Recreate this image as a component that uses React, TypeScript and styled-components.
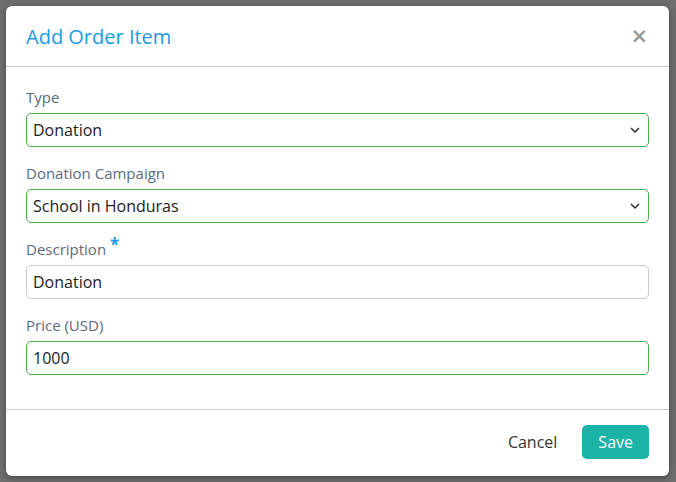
import React from 'react';
import styled, { createGlobalStyle } from 'styled-components';

const GlobalStyle = createGlobalStyle`
  html, body {
    margin: 0;
    padding: 0;
    background: #6e6e6e;
    font-family: "Open Sans", "Noto Sans", sans-serif;
  }
  * { box-sizing: border-box; }
`;

const Backdrop = styled.div`
  width: 676px;
  height: 482px;
  padding: 6px 7px 6px 6px;
  background: #6e6e6e;
`;

const Dialog = styled.div`
  background: #fff;
  border-radius: 6px;
  box-shadow: 0 2px 6px rgba(0, 0, 0, 0.35);
  width: 663px;
  height: 470px;
  display: flex;
  flex-direction: column;
`;

const Header = styled.div`
  height: 61px;
  padding: 0 20px;
  display: flex;
  align-items: center;
  justify-content: space-between;
  border-bottom: 1px solid #c8c8c8;
`;

const Title = styled.h4`
  margin: 0;
  font-size: 20px;
  font-weight: 400;
  color: #1a9be6;
`;

const Close = styled.button`
  border: 0;
  background: none;
  padding: 0;
  margin-right: 1px;
  color: #9a9a9a;
  font-family: "DejaVu Sans", sans-serif;
  font-size: 21px;
  font-weight: 700;
  line-height: 1;
  cursor: pointer;
`;

const Body = styled.div`
  flex: 1;
  padding: 20px 20px 4px;
`;

const Group = styled.div`
  margin-bottom: 16px;
`;

const Label = styled.label`
  display: block;
  font-size: 15px;
  line-height: 21px;
  color: #5a6b7b;
  margin-bottom: 5px;
`;

const Required = styled.span`
  color: #1a9be6;
  font-size: 17px;
  font-weight: 700;
  line-height: 0;
  margin-left: 4px;
  position: relative;
  top: -4px;
`;

const Field = styled.div<{ $valid?: boolean }>`
  height: 34px;
  border: 1px solid ${p => (p.$valid ? '#4caf50' : '#c9c9c9')};
  border-radius: 5px;
  padding: 0 6px;
  display: flex;
  align-items: center;
  font-size: 16px;
  color: #222;
`;

const Value = styled.span`
  flex: 1;
`;

const Chevron = styled.svg`
  width: 10px;
  height: 6px;
  margin-right: 2px;
`;

const Footer = styled.div`
  border-top: 1px solid #c8c8c8;
  padding: 15px 20px 17px;
  display: flex;
  justify-content: flex-end;
  align-items: center;
  gap: 13px;
`;

const Button = styled.button<{ $primary?: boolean }>`
  height: 34px;
  border: 0;
  border-radius: 5px;
  padding: 0 ${p => (p.$primary ? 16 : 12)}px;
  font-family: "Open Sans", "Noto Sans", sans-serif;
  font-size: 16px;
  background: ${p => (p.$primary ? '#1ab3a6' : 'transparent')};
  color: ${p => (p.$primary ? '#fff' : '#333')};
  cursor: pointer;
`;

const ChevronIcon = () => (
  <Chevron viewBox="0 0 10 6">
    <path d="M1 1l4 4 4-4" fill="none" stroke="#222" strokeWidth="1.4" />
  </Chevron>
);

const App: React.FC = () => (
  <>
    <GlobalStyle />
    <Backdrop>
      <Dialog>
        <Header>
          <Title>Add Order Item</Title>
          <Close aria-label="Close">×</Close>
        </Header>
        <Body>
          <Group>
            <Label>Type</Label>
            <Field $valid>
              <Value>Donation</Value>
              <ChevronIcon />
            </Field>
          </Group>
          <Group>
            <Label>Donation Campaign</Label>
            <Field $valid>
              <Value>School in Honduras</Value>
              <ChevronIcon />
            </Field>
          </Group>
          <Group>
            <Label>
              Description<Required>*</Required>
            </Label>
            <Field>
              <Value>Donation</Value>
            </Field>
          </Group>
          <Group>
            <Label>Price (USD)</Label>
            <Field $valid>
              <Value>1000</Value>
            </Field>
          </Group>
        </Body>
        <Footer>
          <Button>Cancel</Button>
          <Button $primary>Save</Button>
        </Footer>
      </Dialog>
    </Backdrop>
  </>
);

export default App;
